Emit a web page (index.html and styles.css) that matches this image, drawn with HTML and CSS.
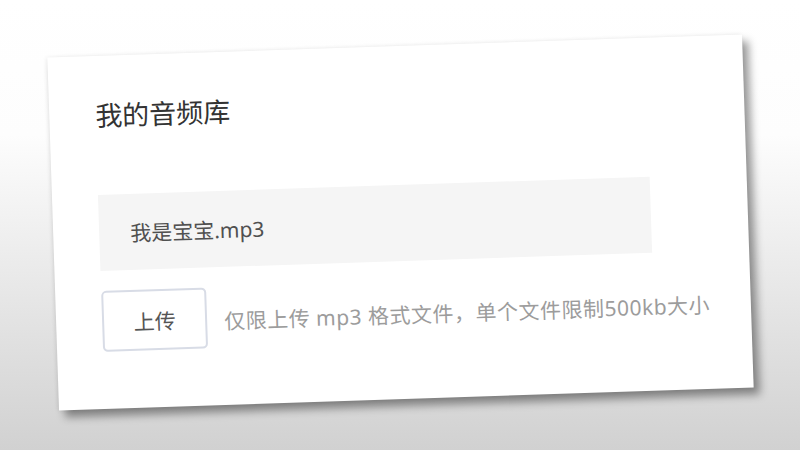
FILE: index.html
```html
<!DOCTYPE html>
<html lang="zh-CN">
<head>
    <meta charset="UTF-8">
    <meta name="viewport" content="width=device-width, initial-scale=1.0">
    <title>我的音频库</title>
    <link rel="stylesheet" href="styles.css">
</head>
<body>
    <div class="stage">
        <div class="card">
            <h2 class="title">我的音频库</h2>
            <div class="file">
                <span class="filename">我是宝宝.mp3</span>
            </div>
            <div class="upload">
                <button class="btn">上传</button>
                <p class="tip">仅限上传 mp3 格式文件，单个文件限制500kb大小</p>
            </div>
        </div>
    </div>
</body>
</html>
```

FILE: styles.css
```css
* {
    margin: 0;
    padding: 0;
    box-sizing: border-box;
}
body, html {
    width: 100%;
    height: 100%;
}
body {
    font-family: "Noto Sans", "Noto Sans CJK SC", sans-serif;
    background: linear-gradient(to bottom, #ffffff 0%, #fdfdfd 30%, #d1d1d1 100%);
    overflow: hidden;
}
.stage {
    height: 450px;
    display: flex;
    align-items: center;
    justify-content: center;
    padding-bottom: 6px;
}
.card {
    width: 695px;
    height: 353px;
    background: #fff;
    padding: 42px 46px 0 46px;
    transform: rotate(-1.9deg);
    box-shadow: 6px 7px 8px rgba(0, 0, 0, 0.4), -1px 0 4px rgba(0, 0, 0, 0.08);
}
.title {
    font-size: 27px;
    font-weight: normal;
    color: #333;
    line-height: 36px;
}
.file {
    width: 552px;
    height: 76px;
    margin-top: 61px;
    background: #f5f5f5;
    display: flex;
    align-items: center;
    padding-left: 31px;
}
.filename {
    font-size: 21px;
    color: #505050;
}
.upload {
    display: flex;
    align-items: center;
    margin-top: 20px;
}
.btn {
    flex-shrink: 0;
    width: 105px;
    height: 61px;
    background: #fff;
    border: 2px solid #d8dce6;
    border-radius: 5px;
    font-family: inherit;
    font-size: 21px;
    color: #555;
}
.tip {
    margin-left: 17px;
    margin-top: 4px;
    font-size: 21px;
    letter-spacing: 0.5px;
    white-space: nowrap;
    color: #9c9c9c;
}
```
